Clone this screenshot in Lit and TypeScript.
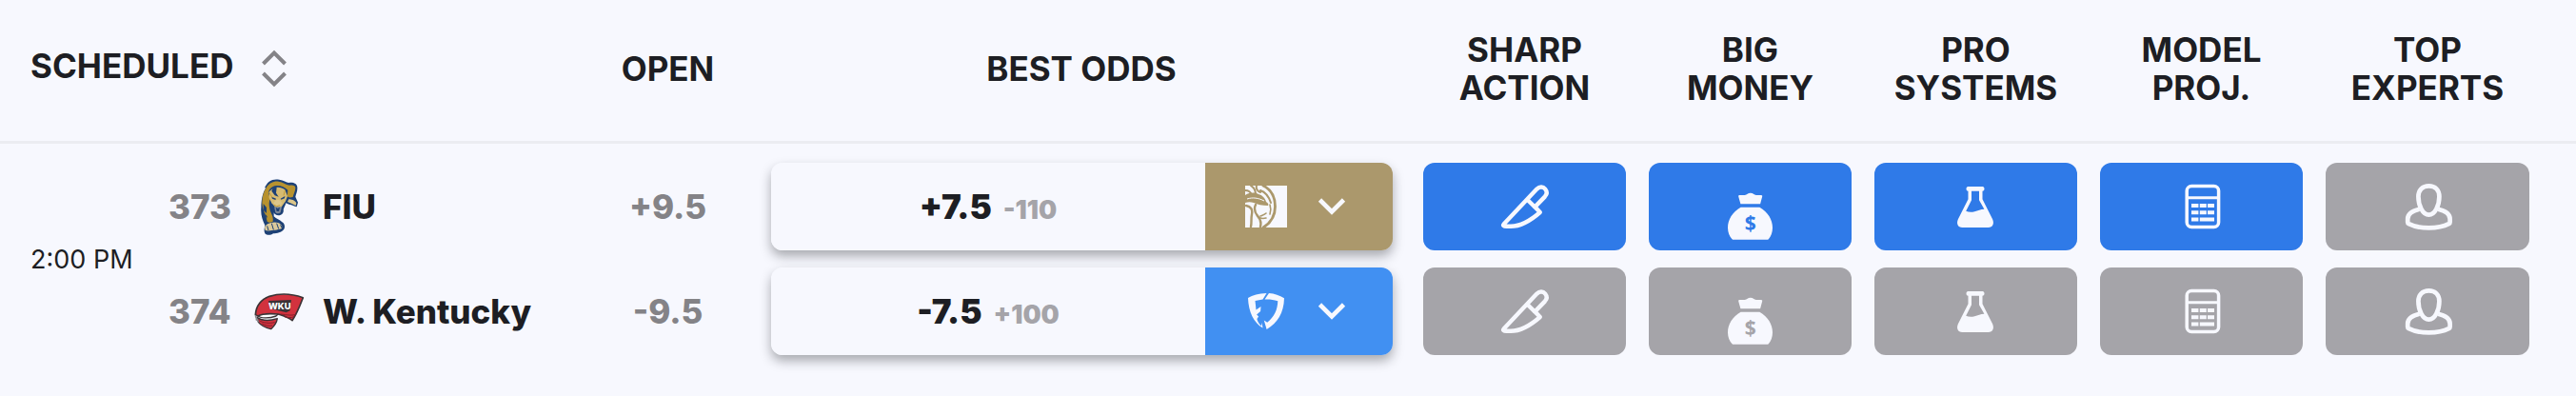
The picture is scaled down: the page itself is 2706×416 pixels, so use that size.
import { LitElement, html, svg, css } from "lit";
import { customElement } from "lit/decorators.js";
import { classMap } from "lit/directives/class-map.js";

const knife = svg`
  <g fill="none" stroke="currentColor" stroke-width="4.4" stroke-linejoin="round">
    <path d="M7.6 48.6 42.4 11.6C45.4 8.6 49 9 51.2 11.6c2.2 2.700 1.800 5.600-.4 8L40.400 30.400l5.400 5.600C36 44.600 26 50.800 15 50.800h-4.600c-3 0-3.800-1-2.800-2.200z"/>
    <path d="m32.400 22.800 8.200 8"/>
  </g>`;

const moneyBag = svg`
  <path fill="currentColor" d="M18.200 18h5.600c2.400-.4 3.200-2.200 6-2.200s3.600 1.800 6 2.200H41c1.200 0 1.400.8 1.100 1.700l-2 7.600H19.400l-2.100-7.600c-.3-.9-.1-1.700.9-1.700z"/>
  <path fill="currentColor" d="M19.600 30.700h19.800C48 35.500 53 43.600 53 52.300c0 5-1.700 9.200-4 11.600-.5.600-1.200.8-2 .8H12.300c-.8 0-1.500-.2-2-.8-2.500-2.400-4.300-6.600-4.300-11.600 0-8.700 5-16.800 13.600-21.600z"/>
  <text class="coin" x="29.700" y="55" text-anchor="middle">$</text>`;

const flask = svg`
  <path fill="currentColor" fill-rule="evenodd" d="M21.500 9h15c1.400 0 2 1 2 2.300s-.6 2.400-2 2.400v8.600l10.600 21c2 4.600.4 8.700-4.600 8.700H15.500c-5 0-6.600-4.100-4.600-8.700l10.600-21v-8.600c-1.400 0-2-1.100-2-2.400S20.100 9 21.500 9zM25 13.700v9.600l-5.800 11.500c2.600 1.200 5.800 1.300 9 .5 3.600-.9 6.200-2.300 10.200-2.500L33 23.300v-9.600z"/>`;

const calculator = svg`
  <g fill="none" stroke="currentColor" stroke-width="3.500">
    <rect x="14.200" y="8.600" width="33.400" height="42.800" rx="5"/>
    <path d="M14 20.700h34" stroke-width="3"/>
  </g>
  <path fill="currentColor" d="M19 27h7.400v4H19zM27.800 27h7v4h-7zM36 27h7v4h-7zM19 34.200h7.400v4H19zM27.800 34.200h7v4h-7zM36 34.200h7v4h-7zM19 41.500h7.400v4H19zM27.800 41.500H43v4H27.800z"/>`;

const expert = svg`
  <g fill="none" stroke="currentColor" stroke-width="4.700">
    <path d="M31.400 8.300c6.600 0 11 4.400 11 11.200 0 9.500-4.600 19.200-11 19.200s-11-9.700-11-19.200c0-6.800 4.400-11.200 11-11.200z"/>
    <path d="M21.500 32.800C13.600 34.600 9.200 38.600 9.200 43v3.400c0 .9.400 1.400 1.200 1.800 5.600 2.900 12.600 4.200 21 4.200s15.400-1.300 21-4.200c.8-.4 1.200-.9 1.200-1.800V43c0-4.400-4.400-8.400-12.300-10.200"/>
  </g>`;

const panther = svg`
  <path fill="#1d4176" d="M84 82C92 62 108 52 130 56c14 2 22 8 30 10 14-2 26 2 27 14 1 12-4 20-6 30l8 18-4 14c-8-2-14-6-24-8l-10-4c-2 8-6 14-8 20 2 8-2 16-10 18-10 2-18-2-20-8v12c8 8 18 10 26 18 8 4 10 14 6 22-8 12-22 12-34 14-8 6-20 6-26 0-4-8-2-18 0-26-8-16-14-34-12-56 0-20 4-46 15-62z"/>
  <path fill="#b7922f" d="M90 80c8-12 22-20 38-18 14 2 22 10 34 12 10-2 20 0 19 9-1 10-6 18-8 28-8 2-14 2-18-2l2-20C146 78 130 72 116 76c-12 4-20 12-20 24l6 18c-6 8-4 24 0 38 6 12 10 22 8 32-8 4-14 4-18 0-4-22-16-38-16-60 0-16 4-34 14-48z"/>
  <path fill="#d6bb72" d="m98 94 12-10c12-6 28-4 38 4l8 20-6 16-14 20-14 4-16-18-8-16z"/>
  <path fill="#1d4176" d="m110 82 12-2-2 18 8 12-12-4-10-14zM106 110l14 6-2 4-10-4zM148 108l-14 8 2 3 11-4zM80 132l10 12v18l-10-10zM84 162l8 10-2 8z"/>
  <path fill="#dcc68a" d="m118 122 8-3 8 3 6 8-6 8h-16l-6-8zM160 118c8 0 18 2 24 12l-2 8-12-6-14-6z"/>
  <path fill="#7d8899" d="M114 142h24l-4 18c-6 4-12 4-16 0z"/>
  <path fill="#1d4176" d="m119 143 6 4 7-4-3 13h-7z"/>
  <path fill="#dbc99a" d="M84 208c2-10 12-14 20-16 14-4 28 0 34 8 3 8-2 14-10 12-8 4-16 2-20 4-8 2-18 2-22 0z"/>
  <path fill="none" stroke="#1d4176" stroke-width="3" d="m92 202 4 14m10-22 6 20m10-20 6 17m6-14 3 10"/>
  <path fill="none" stroke="#c49d35" stroke-width="3" d="m98 96 10 16m40-22-4 16m-30 30 8 4 10-3"/>`;

const redTowel = svg`
  <path fill="#fff" stroke="#3b3336" stroke-width="4" d="M62 484c8 10 36 10 58 2l6-6-4-8H76z"/>
  <path fill="#d2323e" stroke="#3b3336" stroke-width="5" stroke-linejoin="round" d="M55 482c2-28 18-48 44-58 32-10 72-8 106 4-10 26-18 48-34 72-12-10-26-14-44-20-22-2-48-4-64 6z"/>
  <path fill="#d2323e" stroke="#3b3336" stroke-width="4" stroke-linejoin="round" d="M60 490c14 10 38 12 64 4-2 14-10 24-20 33-16-4-32-12-40-22z"/>
  <path fill="none" stroke="#84202a" stroke-width="3" d="M134 480c20 2 38 6 50 0m-38 8c12 4 20 4 32 0M66 500c14 8 32 10 50 6m-40 4c10 6 20 8 32 6"/>
  <path fill="none" stroke="#8c8b90" stroke-width="5" d="M56 484c-2 8 4 10 6 16l-6-4"/>
  <path fill="#3b3336" d="m96 438 72-3-4 34-12 6-50-12z"/>
  <text class="towel" x="131" y="464" text-anchor="middle">WKU</text>`;

const lion = svg`
  <path fill="#f7f8fe" d="M0 0h44v44H0z"/>
  <path fill="#ab986c" d="M0 10c5-3 10-3 14-1 4 1 7 4 8 8 2 1 3 3 2 4-6 0-11-1-15-3-3-1-6-1-9 0z"/>
  <path fill="none" stroke="#f7f8fe" stroke-width="1" d="M2 14c6-2 12-1 18 2"/>
  <g fill="none" stroke="#ab986c" stroke-linecap="round">
    <path stroke-width="2.800" d="M19 0c8 4 12.500 12 12.500 22S27 39 19 44"/>
    <path stroke-width="2" d="M6 0c3 2 5 5 5 9M12 0c-1 3 1 6 4 7M0 5c4 0 6 2 7 5M16 5c6 2 9 7 11 13"/>
    <path stroke-width="2.400" d="M1 21c5 1 7 4 6 9-1 5 0 9-1 13M11 20c-2 4-1 8 2 12 3 3 4 7 3 11"/>
    <path stroke-width="1.600" d="M13 31c2 4 5 4 9 3M16 32c2-1 4-1 6-3M26 20c1 3 1 7 0 10"/>
  </g>`;

const shield = svg`
  <path fill="#f7f8fe" d="M3 8C8 5 14 3.400 22.500 3l-4 6.400-8 1.600 1 9.500 5-3.500-.4 5-4 3.500 2 2-1.700 2.600c.7 3.400 2.600 5.600 4.600 7.400l.6-3.600.9 5.600C9 34 3.500 22.500 3 8z"/>
  <path fill="#f7f8fe" d="M25 3c6 .4 11 2.300 16 5.200C40.600 24 34 34 22.600 41l-2.800-9.500 3.400 2.300C30.500 28 34 20.500 34.300 11.300 29.500 9.600 25.500 9.300 20.500 9.500z"/>`;

interface Book { name: string; logo: unknown; tone: string; }
interface Team {
  rotation: number; name: string; logo: unknown; logoBox: string;
  open: string; spread: string; price: string; book: Book; active: number;
}

const signals = [
  { title: ["Sharp", "Action"], icon: knife },
  { title: ["Big", "Money"], icon: moneyBag },
  { title: ["Pro", "Systems"], icon: flask },
  { title: ["Model", "Proj."], icon: calculator },
  { title: ["Top", "Experts"], icon: expert },
];

const teams: Team[] = [
  { rotation: 373, name: "FIU", logo: panther, logoBox: "39 51 180 180", open: "+9.5", spread: "+7.5", price: "-110",
    book: { name: "BetMGM", logo: lion, tone: "gold" }, active: 4 },
  { rotation: 374, name: "W. Kentucky", logo: redTowel, logoBox: "39 381 180 180", open: "-9.5", spread: "-7.5", price: "+100",
    book: { name: "FanDuel", logo: shield, tone: "sky" }, active: 0 },
];

@customElement("app-root")
export class AppRoot extends LitElement {
  static styles = css`
    :host {
      display: block;
      min-height: 100vh;
      background: #f7f8fe;
      color: #1d1e23;
      font-family: Inter, "Liberation Sans", sans-serif;
      font-size: 35px;
      line-height: 40px;
    }
    * { box-sizing: border-box; }
    button {
      margin: 0;
      padding: 0;
      border: 0;
      background: none;
      color: inherit;
      font: inherit;
      cursor: pointer;
    }
    svg { display: block; flex: none; }
    .board {
      width: 100%;
      border-spacing: 0;
      table-layout: fixed;
    }
    .col-time { width: 160px; }
    .col-open { width: 175px; }
    .col-odds { width: 694px; }
    .col-signal { width: 237px; }
    .col-last { width: 275px; }

    .head {
      height: 151px;
      padding: 0 12px 4px;
      border-bottom: 3px solid #ebecf1;
      font-weight: 700;
      text-transform: uppercase;
      text-align: center;
    }
    .head.first { padding-left: 32px; text-align: left; }
    .head.last { padding-right: 49px; }
    .line { display: block; }
    .sort {
      display: inline-flex;
      align-items: flex-start;
      gap: 30px;
      text-transform: uppercase;
      vertical-align: middle;
    }
    .sort-icon { color: #848387; }

    .cell { padding: 9px 12px; text-align: center; }
    .top .cell { padding-top: 20px; }
    .cell.last { padding-right: 49px; }
    .cell.odds-cell { padding-left: 21px; padding-right: 20px; }
    .cell.team-cell { padding-left: 17px; padding-right: 0; }
    .time {
      padding: 12px 0 0 32px;
      font-size: 27px;
      text-align: left;
      white-space: nowrap;
    }
    .team {
      display: flex;
      align-items: center;
      font-weight: 800;
      white-space: nowrap;
    }
    .rotation { width: 86px; color: #848387; text-align: left; }
    .name { margin-left: 16px; }
    .open { color: #848387; font-weight: 800; }

    .odds {
      display: flex;
      height: 92px;
      border-radius: 12px;
      box-shadow: 0 6px 12px rgba(29, 30, 35, 0.36);
    }
    .price-button {
      flex: 1;
      display: flex;
      align-items: baseline;
      justify-content: center;
      gap: 12px;
      padding: 26px 0;
      border-radius: 12px 0 0 12px;
      background: #f7f8fe;
      font-weight: 900;
    }
    .price { color: #a5a4a9; font-size: 27px; }
    .book {
      display: flex;
      align-items: center;
      gap: 32px;
      width: 197px;
      padding-left: 42px;
      border-radius: 0 12px 12px 0;
      color: #f7f8fe;
    }
    .gold { background: #ab986c; }
    .sky { background: #4190f2; }

    .signal {
      --tile: #a5a4a9;
      display: flex;
      align-items: center;
      justify-content: center;
      width: 100%;
      height: 92px;
      border-radius: 12px;
      background: var(--tile);
      color: #f7f8fe;
    }
    .signal.on { --tile: #2f7ae8; }
    .coin { fill: var(--tile); font: 700 21px "Open Sans", sans-serif; }
    .towel { fill: #fff; font: 800 28px Inter, sans-serif; }
  `;

  private renderTeam(team: Team, index: number) {
    return html`
      <tr class=${index === 0 ? "top" : "bottom"}>
        ${index === 0 ? html`<td class="time" rowspan="2">2:00 PM</td>` : ""}
        <td class="cell team-cell">
          <div class="team">
            <span class="rotation">${team.rotation}</span>
            <svg width="60" height="60" viewBox=${team.logoBox} aria-hidden="true">${team.logo}</svg>
            <span class="name">${team.name}</span>
          </div>
        </td>
        <td class="cell open">${team.open}</td>
        <td class="cell odds-cell">
          <div class="odds">
            <button class="price-button">
              <span>${team.spread}</span><span class="price">${team.price}</span>
            </button>
            <button class="book ${team.book.tone}" aria-haspopup="listbox" aria-label=${team.book.name}>
              <svg width="44" height="44" viewBox="0 0 44 44">${team.book.logo}</svg>
              <svg width="30" height="20" viewBox="0 0 30 20">
                <path d="M2.500 3 15 15.500 27.500 3" fill="none" stroke="currentColor" stroke-width="4.600"/>
              </svg>
            </button>
          </div>
        </td>
        ${signals.map((signal, i) => html`
          <td class=${classMap({ cell: true, last: i === signals.length - 1 })}>
            <button class=${classMap({ signal: true, on: i < team.active })} aria-label=${signal.title.join(" ")}>
              <svg width="60" height="76" viewBox="0 -8 60 76">${signal.icon}</svg>
            </button>
          </td>`)}
      </tr>`;
  }

  render() {
    return html`
      <table class="board">
        <colgroup>
          <col class="col-time" /><col /><col class="col-open" /><col class="col-odds" />
          <col class="col-signal" span="4" /><col class="col-last" />
        </colgroup>
        <thead>
          <tr>
            <th class="head first" colspan="2">
              <button class="sort">
                Scheduled
                <svg class="sort-icon" width="26" height="46" viewBox="5 0 26 46" aria-hidden="true">
                  <path d="m6.500 18 11.500-11.500L29.500 18M6.500 28 18 39.500 29.500 28" fill="none" stroke="currentColor" stroke-width="4"/>
                </svg>
              </button>
            </th>
            <th class="head">Open</th>
            <th class="head">Best Odds</th>
            ${signals.map((signal, i) => html`
              <th class=${classMap({ head: true, last: i === signals.length - 1 })}>
                ${signal.title.map((word) => html`<span class="line">${word}</span>`)}
              </th>`)}
          </tr>
        </thead>
        <tbody>${teams.map((team, i) => this.renderTeam(team, i))}</tbody>
      </table>`;
  }
}
